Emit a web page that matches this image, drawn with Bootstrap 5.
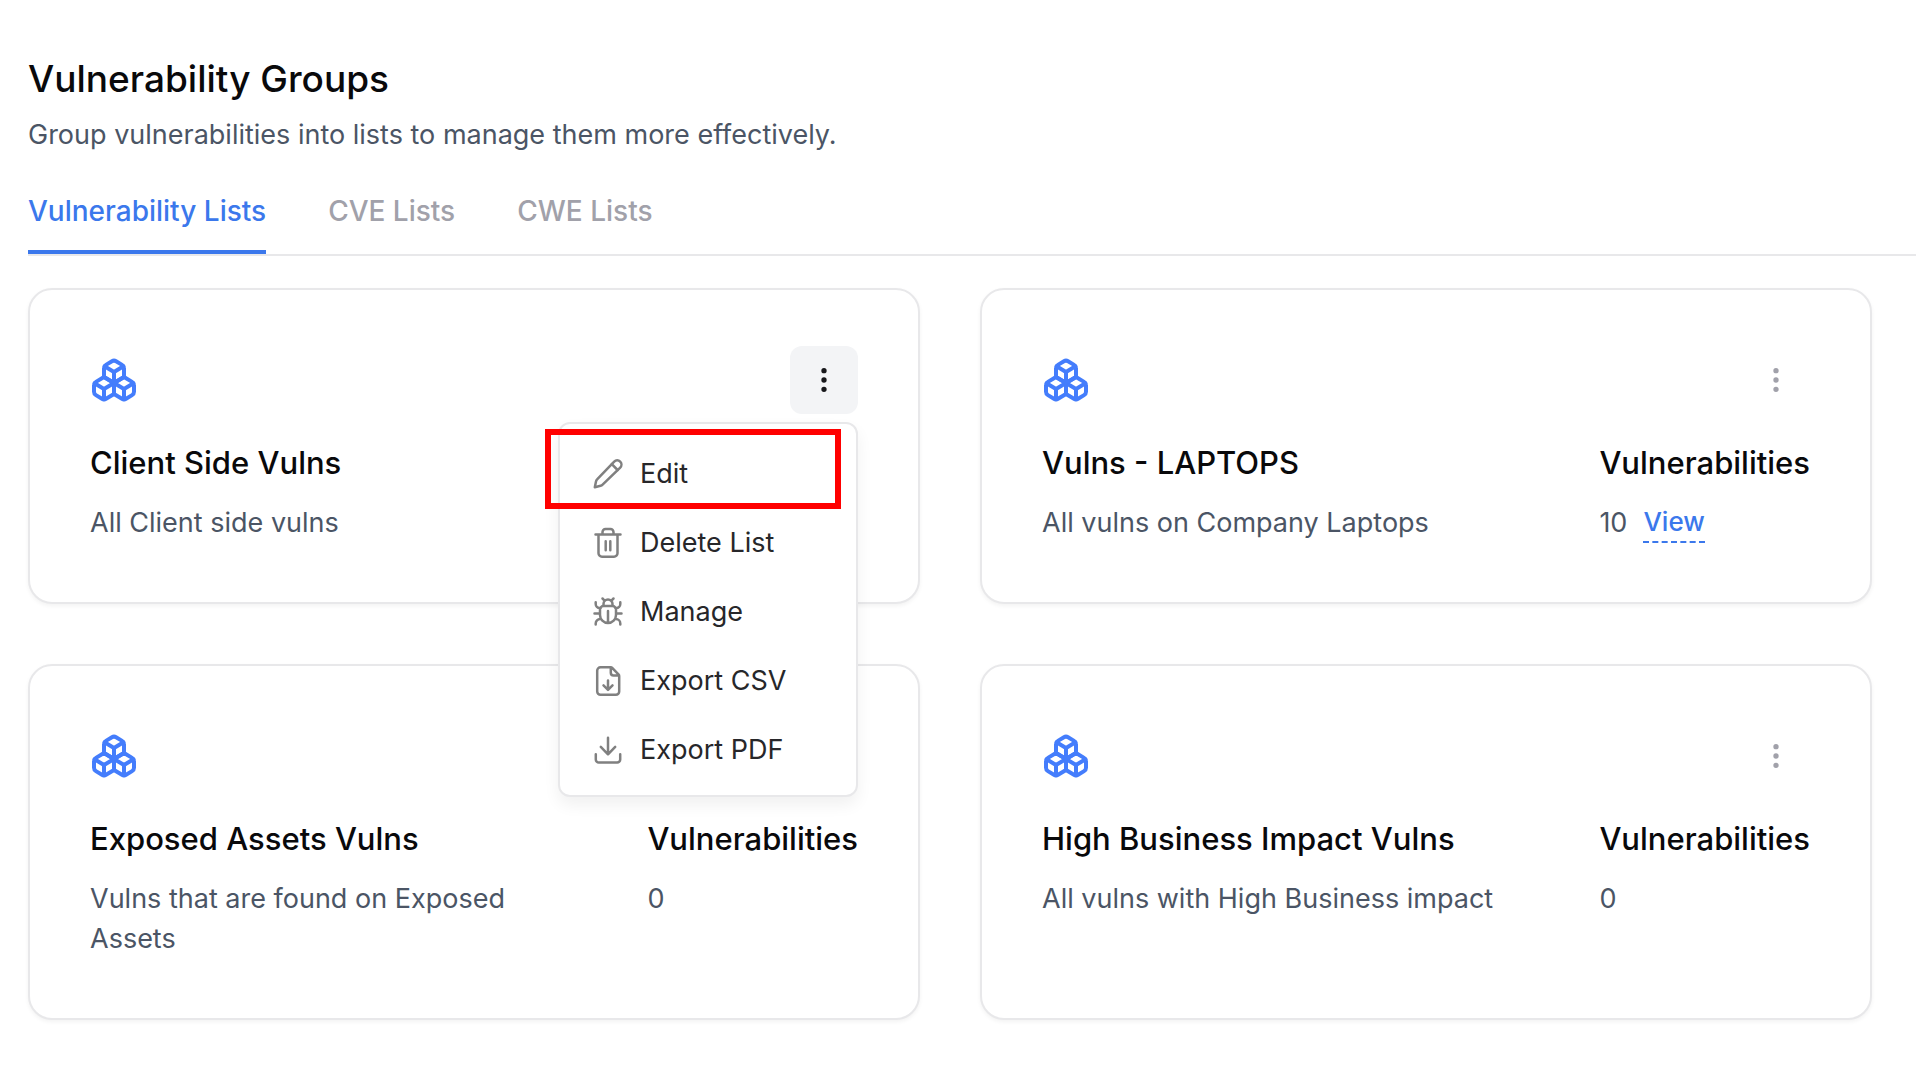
<!DOCTYPE html>
<html lang="en">
<head>
<meta charset="utf-8">
<meta name="viewport" content="width=device-width, initial-scale=1">
<title>Vulnerability Groups</title>
<link href="https://cdn.jsdelivr.net/npm/bootstrap@5.3.0/dist/css/bootstrap.min.css" rel="stylesheet">
<style>
  body { font-family: Inter, "Liberation Sans", sans-serif; font-size: 27px; line-height: 40px; color: #4b5565; background: #fff; }
  .page-shell { padding: 51px 0 60px 28px; }
  .page-title { font-size: 37px; line-height: 56px; font-weight: 500; color: #09090b; margin-bottom: 8px; }
  .page-intro { margin-bottom: 36px; }
  .list-tabs { gap: 62px; border-bottom: 2px solid #e8e8ea; margin-bottom: 32px; }
  .list-tabs .nav-link { padding: 0 0 19px; color: #a1a1aa; font-size: 28px; font-weight: 500; border-bottom: 4px solid transparent; border-radius: 0; }
  .list-tabs .nav-link.active { color: #3b78ec; border-bottom-color: #3b78ec; }
  .group-grid { padding-right: 44px; }
  .group-grid > .row { --bs-gutter-x: 60px; row-gap: 60px; }
  .group-card { border: 2px solid #e8e8ea; border-radius: 24px; box-shadow: 0 2px 4px rgba(0, 0, 0, .05); }
  .group-card > .card-body { padding: 56px 60px 59px; color: #4b5565; }
  .card-tools { margin-bottom: 29px; }
  .group-mark { width: 48px; height: 48px; color: #447dfc; }
  .more-btn { width: 68px; height: 68px; padding: 0; border: 0; border-radius: 12px; color: #a1a1aa; line-height: 1; }
  .more-btn.show { background: #f3f4f6 !important; color: #18181b !important; }
  .card-facts { gap: 64px; }
  .fact-title { font-size: 31px; line-height: 40px; font-weight: 500; color: #09090b; margin-bottom: 20px; }
  .view-link { font-size: 26px; line-height: 38px; font-weight: 500; color: #3b78ec; text-decoration: none; border-bottom: 2px dashed #3b78ec; }
  .action-menu { top: 100%; right: 0; width: 300px; margin-top: 8px; padding: 15px 0 11px; border: 2px solid #e8e8ea; border-radius: 12px; box-shadow: 0 8px 16px rgba(0, 0, 0, .06); font-size: 27px; }
  .action-menu .dropdown-item { display: flex; align-items: center; gap: 16px; height: 69px; padding: 0 32px; color: #27272a; }
  .action-menu svg { width: 32px; height: 32px; flex: none; color: #808080; }
  .callout-box { top: 5px; left: -15px; width: 296px; height: 80px; border: 6px solid #f00; pointer-events: none; }
  .stroke-icon { fill: none; stroke: currentColor; stroke-width: 2; stroke-linecap: round; stroke-linejoin: round; }
  .action-menu .stroke-icon { stroke-width: 2.5; }
</style>
</head>
<body>
<svg class="d-none" aria-hidden="true">
  <symbol id="boxes" viewBox="0 0 24 24">
    <path d="M2.97 12.92A2 2 0 0 0 2 14.63v3.24a2 2 0 0 0 .97 1.71l3 1.8a2 2 0 0 0 2.06 0L12 19v-5.5l-5-3-4.03 2.42Z"/>
    <path d="m7 16.5-4.74-2.85M7 16.5l5-3M7 16.5v5.17"/>
    <path d="M12 13.5V19l3.97 2.38a2 2 0 0 0 2.06 0l3-1.8a2 2 0 0 0 .97-1.71v-3.24a2 2 0 0 0-.97-1.71L17 10.5l-5 3Z"/>
    <path d="m17 16.5-5-3M17 16.5l4.74-2.85M17 16.5v5.17"/>
    <path d="M7.97 4.42A2 2 0 0 0 7 6.13v4.37l5 3 5-3V6.13a2 2 0 0 0-.97-1.71l-3-1.8a2 2 0 0 0-2.06 0l-3 1.8Z"/>
    <path d="M12 8 7.26 5.15M12 8l4.74-2.85M12 13.5V8"/>
  </symbol>
  <symbol id="dots" viewBox="0 0 24 24">
    <circle cx="12" cy="12" r="1"/><circle cx="12" cy="5" r="1"/><circle cx="12" cy="19" r="1"/>
  </symbol>
</svg>

<main class="page-shell">
  <header>
    <h1 class="page-title">Vulnerability Groups</h1>
    <p class="page-intro">Group vulnerabilities into lists to manage them more effectively.</p>
  </header>

  <nav class="nav list-tabs" aria-label="List types">
    <a class="nav-link active" href="#" aria-current="page">Vulnerability Lists</a>
    <a class="nav-link" href="#">CVE Lists</a>
    <a class="nav-link" href="#">CWE Lists</a>
  </nav>

  <div class="group-grid">
    <div class="row row-cols-2 mx-0">
      <div class="col ps-0">
        <section class="card group-card h-100">
          <div class="card-body">
            <div class="card-tools d-flex justify-content-between align-items-center">
              <svg class="group-mark stroke-icon" aria-hidden="true"><use href="#boxes"/></svg>
              <div class="dropdown">
                <button class="btn more-btn show" type="button" aria-label="Client Side Vulns actions" aria-expanded="true" data-bs-toggle="dropdown">
                  <svg class="stroke-icon" width="32" height="32" aria-hidden="true"><use href="#dots"/></svg>
                </button>
                <div class="dropdown-menu action-menu show">
                  <a class="dropdown-item" href="#">
                    <svg class="stroke-icon" viewBox="0 0 32 32" aria-hidden="true"><path d="M2.8 29.2 4 23.4a4 4 0 0 1 1.1-2L22.2 3.6a4.1 4.1 0 0 1 6 6L10.6 26.7a4 4 0 0 1-2 1.1Z"/><path d="m19.8 6.2 5.8 5.8"/></svg>Edit</a>
                  <a class="dropdown-item" href="#">
                    <svg class="stroke-icon" viewBox="0 0 32 32" aria-hidden="true"><path d="M3.5 7.5h25M6.500 7.500v18.700a3.500 3.500 0 0 0 3.500 3.500h12a3.500 3.500 0 0 0 3.500-3.500V7.500M10.500 7V5a3 3 0 0 1 3-3h5a3 3 0 0 1 3 3v2M13.700 14.300v9M18.300 14.300v9"/></svg>Delete List</a>
                  <a class="dropdown-item" href="#">
                    <svg class="stroke-icon" viewBox="0 0 32 32" aria-hidden="true"><path d="M11.500 10h9a3.500 3.500 0 0 1 3.500 3.500V19a8 8 0 0 1-16 0v-5.500a3.500 3.500 0 0 1 3.500-3.500ZM11.500 9.500V8a4.500 4.500 0 0 1 9 0v1.500M10.500 2.500l2.300 2.300M21.500 2.500l-2.300 2.300M16 15v11.500M2.500 17.500H8M24 17.500h5.500M3.700 6.300v1.700a4 4 0 0 0 4 4l1 .1M28.300 6.300v1.700a4 4 0 0 1-4 4l-1 .1M3.700 28.500v-1a4.500 4.500 0 0 1 4.500-4.500M28.300 28.500v-1a4.500 4.500 0 0 0-4.500-4.500"/></svg>Manage</a>
                  <a class="dropdown-item" href="#">
                    <svg class="stroke-icon" viewBox="0 0 32 32" aria-hidden="true"><path d="M8.500 2.300h10.300a2 2 0 0 1 1.400.6l6.500 6.800a2 2 0 0 1 .5 1.400v15.400a3.300 3.300 0 0 1-3.300 3.300H8.500a3.300 3.300 0 0 1-3.300-3.300V5.600a3.300 3.300 0 0 1 3.300-3.300ZM18.800 2.500v5.200a2.700 2.700 0 0 0 2.700 2.700h5.500M16 15.500v9M11.500 20.300l4.500 4.500 4.500-4.500"/></svg>Export CSV</a>
                  <a class="dropdown-item" href="#">
                    <svg class="stroke-icon" viewBox="0 0 32 32" aria-hidden="true"><path d="M16 3.800v16.500M8.800 12.800l7.200 7.500 7.200-7.500M3.800 20.300v5.200a3 3 0 0 0 3 3h18.400a3 3 0 0 0 3-3v-5.200"/></svg>Export PDF</a>
                  <div class="callout-box position-absolute"></div>
                </div>
              </div>
            </div>
            <h2 class="fact-title">Client Side Vulns</h2>
            <p class="mb-0">All Client side vulns</p>
          </div>
        </section>
      </div>

      <div class="col pe-0">
        <section class="card group-card h-100">
          <div class="card-body">
            <div class="card-tools d-flex justify-content-between align-items-center">
              <svg class="group-mark stroke-icon" aria-hidden="true"><use href="#boxes"/></svg>
              <button class="btn more-btn" type="button" aria-label="Vulns - LAPTOPS actions"><svg class="stroke-icon" width="32" height="32" aria-hidden="true"><use href="#dots"/></svg></button>
            </div>
            <div class="card-facts d-flex justify-content-between">
              <div>
                <h2 class="fact-title">Vulns - LAPTOPS</h2>
                <p class="mb-0">All vulns on Company Laptops</p>
              </div>
              <div class="flex-shrink-0">
                <h3 class="fact-title">Vulnerabilities</h3>
                <div class="d-flex gap-3 align-items-start"><span>10</span><a class="view-link" href="#">View</a></div>
              </div>
            </div>
          </div>
        </section>
      </div>

      <div class="col ps-0">
        <section class="card group-card h-100">
          <div class="card-body">
            <div class="card-tools d-flex justify-content-between align-items-center">
              <svg class="group-mark stroke-icon" aria-hidden="true"><use href="#boxes"/></svg>
              <button class="btn more-btn" type="button" aria-label="Exposed Assets Vulns actions"><svg class="stroke-icon" width="32" height="32" aria-hidden="true"><use href="#dots"/></svg></button>
            </div>
            <div class="card-facts d-flex justify-content-between">
              <div>
                <h2 class="fact-title">Exposed Assets Vulns</h2>
                <p class="mb-0">Vulns that are found on Exposed Assets</p>
              </div>
              <div class="flex-shrink-0">
                <h3 class="fact-title">Vulnerabilities</h3>
                <span>0</span>
              </div>
            </div>
          </div>
        </section>
      </div>

      <div class="col pe-0">
        <section class="card group-card h-100">
          <div class="card-body">
            <div class="card-tools d-flex justify-content-between align-items-center">
              <svg class="group-mark stroke-icon" aria-hidden="true"><use href="#boxes"/></svg>
              <button class="btn more-btn" type="button" aria-label="High Business Impact Vulns actions"><svg class="stroke-icon" width="32" height="32" aria-hidden="true"><use href="#dots"/></svg></button>
            </div>
            <div class="card-facts d-flex justify-content-between">
              <div>
                <h2 class="fact-title">High Business Impact Vulns</h2>
                <p class="mb-0">All vulns with High Business impact</p>
              </div>
              <div class="flex-shrink-0">
                <h3 class="fact-title">Vulnerabilities</h3>
                <span>0</span>
              </div>
            </div>
          </div>
        </section>
      </div>
    </div>
  </div>
</main>
<script src="https://cdn.jsdelivr.net/npm/bootstrap@5.3.0/dist/js/bootstrap.bundle.min.js"></script>
</body>
</html>
